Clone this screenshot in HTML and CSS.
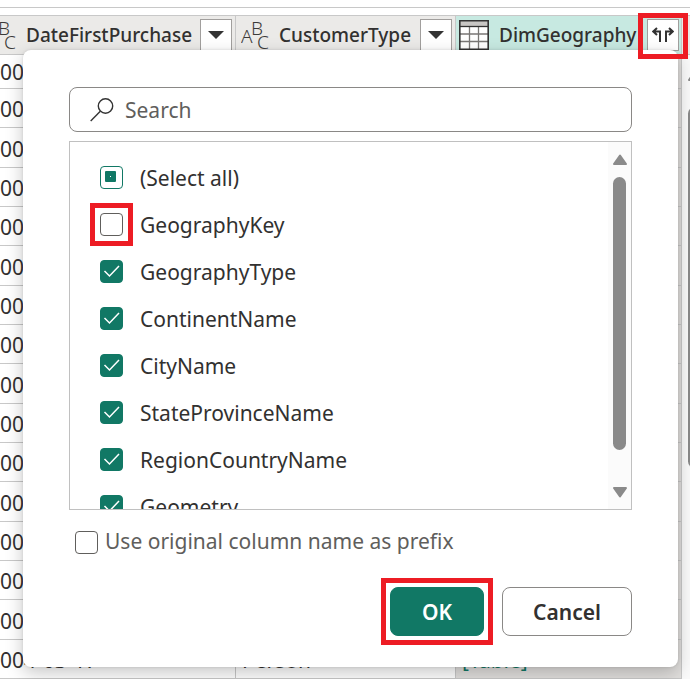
FILE: index.html
```html
<!DOCTYPE html>
<html lang="en">
<head>
<meta charset="utf-8">
<title>Expand column</title>
<link rel="stylesheet" href="styles.css">
</head>
<body>
<div class="formula-edge"></div>
<main class="preview">
  <table class="grid">
    <colgroup><col class="col-date"><col class="col-type"><col></colgroup>
    <thead>
      <tr>
        <th scope="col"><div class="head head-cut">
          <svg class="abc" viewBox="0 0 28 30" aria-hidden="true"><text x="0" y="23">A</text><text x="10" y="15">B</text><text x="16" y="29">C</text></svg>
          <span class="name">DateFirstPurchase</span>
          <button class="head-button" type="button" aria-label="Filter DateFirstPurchase"><svg width="16" height="8" viewBox="0 0 16 8"><path d="M0 0h16L8 8z" fill="#333"/></svg></button>
        </div></th>
        <th scope="col"><div class="head">
          <svg class="abc" viewBox="0 0 28 30" aria-hidden="true"><text x="0" y="23">A</text><text x="10" y="15">B</text><text x="16" y="29">C</text></svg>
          <span class="name">CustomerType</span>
          <button class="head-button" type="button" aria-label="Filter CustomerType"><svg width="16" height="8" viewBox="0 0 16 8"><path d="M0 0h16L8 8z" fill="#333"/></svg></button>
        </div></th>
        <th scope="col" class="selected"><div class="head head-table">
          <svg class="table-icon" viewBox="0 0 30 30" aria-hidden="true"><path d="M1 1h28v28H1z" fill="#fff"/><path d="M1 1h28v5H1z" fill="#c8c6c4"/><path d="M10.500 7v22M19.500 7v22M1 14h28M1 21.500h28" stroke="#797775" stroke-width="1.300"/><path d="M1 6.500h28" stroke="#333" stroke-width="1.300"/><path d="M.8.800h28.400v28.400H.8z" fill="none" stroke="#333" stroke-width="1.600"/></svg>
          <span class="name">DimGeography</span>
          <button class="head-button" type="button" aria-label="Expand DimGeography"><svg width="22" height="16" viewBox="0 0 22 16" fill="none" stroke="#333" stroke-width="2"><path d="M5 1 1.300 4.500 5 8M1.500 4.500H8V15M17 1l3.700 3.500L17 8M20.500 4.500H14V15"/></svg></button>
          <span class="mark mark-expand"></span>
        </div></th>
      </tr>
    </thead>
    <tbody>
      <tr><td>00</td><td></td><td></td></tr>
      <tr><td>00</td><td></td><td></td></tr>
      <tr><td>00</td><td></td><td></td></tr>
      <tr><td>00</td><td></td><td></td></tr>
      <tr><td>00</td><td></td><td></td></tr>
      <tr><td>00</td><td></td><td></td></tr>
      <tr><td>00</td><td></td><td></td></tr>
      <tr><td>00</td><td></td><td></td></tr>
      <tr><td>00</td><td></td><td></td></tr>
      <tr><td>00</td><td></td><td></td></tr>
      <tr><td>00</td><td></td><td></td></tr>
      <tr><td>00</td><td></td><td></td></tr>
      <tr><td>00</td><td></td><td></td></tr>
      <tr><td>00</td><td></td><td></td></tr>
      <tr><td>00</td><td></td><td></td></tr>
      <tr><td>004-03-17</td><td>Person</td><td>[Table]</td></tr>
    </tbody>
  </table>
  <div class="page-scroll" aria-hidden="true">
    <div class="page-scroll-head"></div>
    <svg width="16" height="12" viewBox="0 0 16 12"><path d="M8 1.500 14 10H2z" fill="#8a8a8a" stroke="#8a8a8a" stroke-width="2" stroke-linejoin="round"/></svg>
    <div class="page-thumb"></div>
  </div>
</main>

<form class="dialog" role="dialog" aria-label="Expand columns">
  <div class="search">
    <svg width="24" height="24" viewBox="0 0 24 24" fill="none" stroke="#333" stroke-width="1.400" aria-hidden="true"><circle cx="15.500" cy="8" r="7.200"/><path d="M10.300 13.200.7 23"/></svg>
    <input type="search" placeholder="Search" aria-label="Search">
  </div>
  <div class="list">
    <div class="options">
      <label class="option"><span class="box"><input type="checkbox" class="partial"><svg viewBox="0 0 23 23"><rect x="5" y="5" width="11" height="11" rx="1" fill="#117865"/><path d="M10 10h1v1h-1z" fill="#fff"/></svg></span>(Select all)</label>
      <label class="option"><span class="box"><input type="checkbox"><span class="mark mark-box"></span></span>GeographyKey</label>
      <label class="option"><span class="box"><input type="checkbox" checked><svg viewBox="0 0 23 23"><path d="m4.500 11 5 5L19 6" fill="none" stroke="#fff" stroke-width="1.500"/></svg></span>GeographyType</label>
      <label class="option"><span class="box"><input type="checkbox" checked><svg viewBox="0 0 23 23"><path d="m4.500 11 5 5L19 6" fill="none" stroke="#fff" stroke-width="1.500"/></svg></span>ContinentName</label>
      <label class="option"><span class="box"><input type="checkbox" checked><svg viewBox="0 0 23 23"><path d="m4.500 11 5 5L19 6" fill="none" stroke="#fff" stroke-width="1.500"/></svg></span>CityName</label>
      <label class="option"><span class="box"><input type="checkbox" checked><svg viewBox="0 0 23 23"><path d="m4.500 11 5 5L19 6" fill="none" stroke="#fff" stroke-width="1.500"/></svg></span>StateProvinceName</label>
      <label class="option"><span class="box"><input type="checkbox" checked><svg viewBox="0 0 23 23"><path d="m4.500 11 5 5L19 6" fill="none" stroke="#fff" stroke-width="1.500"/></svg></span>RegionCountryName</label>
      <label class="option"><span class="box"><input type="checkbox" checked><svg viewBox="0 0 23 23"><path d="m4.500 11 5 5L19 6" fill="none" stroke="#fff" stroke-width="1.500"/></svg></span>Geometry</label>
    </div>
    <div class="scroll" aria-hidden="true">
      <svg width="16" height="12" viewBox="0 0 16 12"><path d="M8 1.500 14 10H2z" fill="#8a8a8a" stroke="#8a8a8a" stroke-width="2" stroke-linejoin="round"/></svg>
      <div class="thumb"></div>
      <svg width="16" height="12" viewBox="0 0 16 12"><path d="M8 10.500 14 2H2z" fill="#8a8a8a" stroke="#8a8a8a" stroke-width="2" stroke-linejoin="round"/></svg>
    </div>
  </div>
  <label class="prefix"><span class="box"><input type="checkbox"></span>Use original column name as prefix</label>
  <div class="actions">
    <span class="ok-wrap"><button class="button primary" type="button">OK</button><span class="mark mark-ok"></span></span>
    <button class="button" type="button">Cancel</button>
  </div>
</form>
</body>
</html>
```
FILE: styles.css
```css
* { box-sizing: border-box; }

body {
  margin: 0;
  position: relative;
  overflow: hidden;
  background: #fff;
  color: #323130;
  font: 21px/28px "Noto Sans", "Open Sans", sans-serif;
}

button, input { font: inherit; color: inherit; margin: 0; }

.formula-edge {
  height: 8px;
  margin-bottom: 7px;
  border-bottom: 1px solid #c8c8c8;
}

/* Data preview behind the dialog */
.preview { display: grid; grid-template-columns: 1fr 8px; }

.grid {
  width: 100%;
  table-layout: fixed;
  border-collapse: separate;
  border-spacing: 0;
}
.col-date { width: 236px; }
.col-type { width: 220px; }

.grid th {
  height: 40px;
  padding: 0;
  border: solid #c8c8c8;
  border-width: 1px 1px 1px 0;
  background: #ebeae8;
  text-align: left;
}
.grid th.selected { background: #c7e9e1; }

.head {
  position: relative;
  display: flex;
  align-items: center;
  height: 38px;
  padding: 0 3px 0 5px;
}
.head-cut .abc { margin-left: -17px; }
.head-table { padding: 0 2px 0 3px; }
.name {
  flex: 1;
  min-width: 0;
  margin-left: 10px;
  font-size: 19px;
  font-weight: 500;
  white-space: nowrap;
}

.abc { flex: none; width: 28px; height: 30px; fill: #3b3a39; font-size: 19px; font-weight: 300; }
.table-icon { flex: none; width: 30px; height: 30px; }

.head-button {
  flex: none;
  display: grid;
  place-items: center;
  width: 32px;
  height: 32px;
  padding: 0;
  border: 1px solid #a19f9d;
  background: #fff;
}

.grid td {
  height: 39px;
  padding: 2px 0 0 6px;
  border: solid #c8c8c8;
  border-width: 0 1px 1px 0;
  line-height: 36px;
  white-space: nowrap;
}
.grid td:first-child { padding-left: 0; }
.grid td:last-child { background: #e1dfdd; color: #117865; }
.grid tbody tr:first-child td { height: 34px; padding-top: 0; line-height: 28px; }
.grid tbody tr:nth-child(3n) td { height: 40px; }

.page-scroll {
  overflow: hidden;
  background: #fafafa;
}
.page-scroll-head {
  height: 40px;
  margin-bottom: 15px;
  border: solid #c8c8c8;
  border-width: 1px 0;
  background: #ebeae8;
}
.page-scroll svg { display: block; margin-left: 5px; }
.page-thumb {
  width: 13px;
  height: 361px;
  margin: 25px 0 0 6px;
  border-radius: 7px;
  background: #8a8a8a;
}

/* Dialog */
.dialog {
  position: absolute;
  top: 50px;
  left: 23px;
  right: 12px;
  z-index: 1;
  padding: 37px 46px 31px;
  border-radius: 8px;
  background: #fff;
  box-shadow: 0 6px 18px rgba(0, 0, 0, 0.22), 0 0 3px rgba(0, 0, 0, 0.12);
}

.search {
  display: flex;
  align-items: center;
  gap: 11px;
  height: 45px;
  padding: 0 20px;
  border: 1px solid #8a8886;
  border-radius: 8px;
}
.search svg { flex: none; }
.search input {
  flex: 1;
  min-width: 0;
  padding: 0;
  border: 0;
  outline: 0;
  background: none;
}
.search input::placeholder { color: #605e5c; opacity: 1; }

.list {
  display: flex;
  height: 369px;
  margin-top: 9px;
  overflow: hidden;
  border: 1px solid #c0c0c0;
}
.options { flex: 1; padding: 12px 0 0 30px; }
.option { display: flex; align-items: center; gap: 17px; height: 47px; }

.box { position: relative; flex: none; display: grid; width: 23px; height: 23px; }
.box input, .box svg { grid-area: 1 / 1; width: 23px; height: 23px; }
.box svg { z-index: 1; pointer-events: none; }
.box input {
  appearance: none;
  border: 1px solid #605e5c;
  border-radius: 4px;
  background: #fff;
}
.box input:checked { border-color: #117865; background: #117865; }
.box input.partial { border-color: #117865; }

.scroll {
  display: flex;
  flex-direction: column;
  align-items: center;
  width: 23px;
  padding: 12px 0 11px;
  background: #fbfbfb;
}
.thumb { width: 13px; height: 273px; margin: 11px 0 auto; border-radius: 7px; background: #8a8a8a; }

.prefix {
  display: flex;
  align-items: flex-start;
  gap: 7px;
  height: 23px;
  margin: 21px 0 0 6px;
  color: #605e5c;
  line-height: 20px;
}

.actions { display: flex; justify-content: flex-end; gap: 18px; margin-top: 33px; }
.ok-wrap { position: relative; display: flex; }
.button {
  width: 130px;
  height: 49px;
  padding: 0;
  border: 1px solid #8a8886;
  border-radius: 8px;
  background: #fff;
  font-weight: 600;
}
.button.primary { width: 94px; border-color: #117865; background: #117865; color: #fff; }

/* Red callout frames */
.mark { position: absolute; border: 5px solid #ed1c24; pointer-events: none; }
.mark-expand { z-index: 2; top: -3px; right: -7px; width: 50px; height: 46px; }
.mark-box { inset: -10px; }
.mark-ok { inset: -9px; }
```
